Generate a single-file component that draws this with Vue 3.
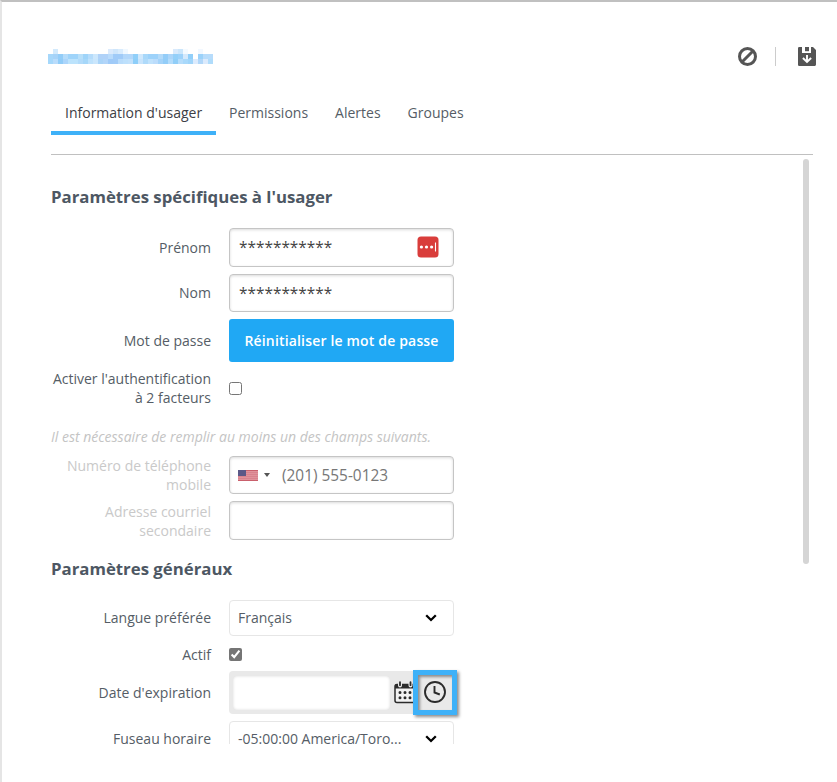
<script setup>
import { ref } from 'vue'

const tabs = ["Information d'usager", 'Permissions', 'Alertes', 'Groupes']
const active = ref(0)
const twoFactor = ref(false)
const enabled = ref(true)

const mosaic = [
  '- d3eafc - - - - - - - - - - dbeafc cfe6fb d9ecfd f0f8ff - - - - - - - - - d9eafc cbe6fb f4faff - - f2f8ff - -',
  'a6d7fa a6d3f8 93cdf8 b5dcfa 9fd4fa 9fd4fa b7dff9 9fd4f9 b5dcfb cce7fc b0d2f8 b0d2f8 b9dbfb a0cbf8 a0cbf8 b2d7fa b2d7fa 90cff9 d0e8fc a8d8fa 9dd2fa 9dd2fa b3daf9 94cdf8 abd5f9 94d0f9 9dd2fa d4e9fc 92cff9 ffffff 9bd2fa b7dcfb b7dcfb',
  'a5d8fb b9dcfb 90ccf8 abd5fb bce3fc bce3fc b2dbfa a6d7f9 bee2fc cae6fc aad4f8 b2d5f9 9fcaf8 a0cbf8 b9dcfb bde0fc c2e1fb 8ecef9 c8e4fc afdafa c0e2fc bbdcfb a4d3f9 93cdf8 b3dcfb 91cef8 b6ddfb a9d9fb a0d5fa dcebfd b1d7f9 dbeafc b0dcfb'
].map((row) => row.split(' ').map((c) => (c === '-' ? 'transparent' : '#' + c)))
</script>

<template>
  <main class="panel">
    <header class="header">
      <div class="mosaic">
        <div v-for="(row, r) in mosaic" :key="r" class="mosaic-row">
          <span v-for="(c, i) in row" :key="i" :style="{ background: c }"></span>
        </div>
      </div>
      <div class="actions">
        <svg class="ban" viewBox="0 0 20 20" width="20" height="20">
          <circle cx="10.500" cy="9.500" r="8" fill="none" stroke="#555" stroke-width="3" />
          <path d="M5 15 16 4" stroke="#555" stroke-width="3" />
        </svg>
        <span class="divider"></span>
        <svg viewBox="0 0 18 19" width="18" height="19">
          <path d="M1.200 0H4v6h9V0h2l3 3v14.600Q18 19 16.800 19H1.200Q0 19 0 17.800V1.200Q0 0 1.200 0Z" fill="#555" />
          <path d="M7 0h4v4.200H7z" fill="#555" />
          <path d="M9 8v7M4.900 11 9 15l4.100-4" fill="none" stroke="#fff" stroke-width="1.900" />
        </svg>
      </div>
    </header>

    <nav class="tabs">
      <button v-for="(t, i) in tabs" :key="t" class="tab" :class="{ active: active === i }" @click="active = i">{{ t }}</button>
    </nav>

    <div class="scroll">
      <form class="form" @submit.prevent>
        <h2>Paramètres spécifiques à l'usager</h2>
        <div class="row first">
          <label>Prénom</label>
          <div class="input">
            <span class="stars">***********</span>
            <svg class="pass" viewBox="0 0 22 22" width="22" height="22">
              <rect x=".5" y=".5" width="21" height="21" rx="3.500" fill="#d93d3b" />
              <circle cx="4.400" cy="11" r="1.600" fill="#fff" />
              <circle cx="9.500" cy="11" r="1.600" fill="#fff" />
              <circle cx="14.600" cy="11" r="1.600" fill="#fff" />
              <path d="M18.500 6.500v9" stroke="#fff" stroke-width="1.100" />
            </svg>
          </div>
        </div>
        <div class="row second">
          <label class="raised">Nom</label>
          <div class="input"><span class="stars">***********</span></div>
        </div>
        <div class="row tall">
          <label>Mot de passe</label>
          <button class="reset">Réinitialiser le mot de passe</button>
        </div>
        <div class="row double">
          <label class="raised">Activer l'authentification<br />à 2 facteurs</label>
          <input v-model="twoFactor" type="checkbox" />
        </div>
        <p class="note">Il est nécessaire de remplir au moins un des champs suivants.</p>
        <div class="row second muted">
          <label>Numéro de téléphone<br />mobile</label>
          <div class="input phone">
            <svg class="flag" viewBox="0 0 20 11" width="20" height="11">
              <rect width="20" height="11" fill="#e0929b" />
              <path d="M0 .5h20M0 10.500h20" stroke="#c9606c" />
              <path d="M0 2.500h20M0 4.500h20M0 6.500h20M0 8.500h20" stroke="#d67e89" stroke-width=".8" />
              <rect width="8" height="6" fill="#5b5887" />
            </svg>
            <span class="caret"></span>
            <span class="number">(201) 555-0123</span>
          </div>
        </div>
        <div class="row first muted">
          <label>Adresse courriel<br />secondaire</label>
          <div class="input"></div>
        </div>
        <h2 class="general">Paramètres généraux</h2>
        <div class="row choice">
          <label>Langue préférée</label>
          <div class="select">
            <span>Français</span>
            <svg viewBox="0 0 12 8" width="12" height="8"><path d="M1.200 1.300 6 6l4.800-4.700" fill="none" stroke="#000" stroke-width="2.300" /></svg>
          </div>
        </div>
        <div class="row check">
          <label>Actif</label>
          <input v-model="enabled" type="checkbox" />
        </div>
        <div class="row tall">
          <label>Date d'expiration</label>
          <div class="date">
            <span class="date-field"></span>
            <svg class="calendar" viewBox="0 0 22 23" width="22" height="23">
              <rect x="1" y="3.500" width="20" height="18" rx="2" fill="#f2f2f2" stroke="#2b2b2b" stroke-width="1.500" />
              <path d="M1 7.500V4.500Q1 3 2.500 3h17Q21 3 21 4.500v3z" fill="#2b2b2b" />
              <path d="M6 1v3.500M16.500 1v3.500" stroke="#e9e9e9" stroke-width="4" stroke-linecap="round" />
              <path d="M6 1.200v3M16.500 1.200v3" stroke="#2b2b2b" stroke-width="1.800" stroke-linecap="round" />
              <path d="M6 11.500h12M6 16.800h12" stroke="#2b2b2b" stroke-width="3" stroke-linecap="round" stroke-dasharray="0 5" />
            </svg>
            <div class="highlight">
              <svg viewBox="0 0 22 22" width="22" height="22">
                <circle cx="11" cy="11" r="10" fill="none" stroke="#2b2b2b" stroke-width="1.900" />
                <path d="M10.500 5v6.500l5.300 2" fill="none" stroke="#2b2b2b" stroke-width="1.900" />
              </svg>
            </div>
          </div>
        </div>
        <div class="row choice">
          <label>Fuseau horaire</label>
          <div class="select">
            <span>-05:00:00 America/Toro...</span>
            <svg viewBox="0 0 12 8" width="12" height="8"><path d="M1.200 1.300 6 6l4.800-4.700" fill="none" stroke="#000" stroke-width="2.300" /></svg>
          </div>
        </div>
      </form>
      <div class="scrollbar"></div>
    </div>
  </main>
</template>

<style>
body {
  background: #fff;
  overflow: hidden;
}
</style>

<style scoped>
* {
  box-sizing: border-box;
}
.panel {
  height: 782px;
  border-top: 2px solid #c0c0c0;
  border-left: 2px solid #e5e5e5;
  font: 14px/19px 'Open Sans', sans-serif;
  color: #555d66;
}
.header {
  display: flex;
  justify-content: space-between;
  height: 92px;
  padding: 45px 21px 0 46px;
}
.mosaic {
  padding-top: 2px;
}
.mosaic-row {
  display: flex;
}
.mosaic-row span {
  width: 5px;
  height: 5px;
}
.actions {
  display: flex;
  align-items: flex-start;
}
.ban {
  margin-right: 18px;
}
.divider {
  width: 1px;
  height: 19px;
  background: #ccc;
  margin-right: 22px;
}
.tabs {
  display: flex;
  height: 61px;
  margin: 0 24px 0 49px;
  border-bottom: 1px solid #c0c0c0;
}
.tab {
  height: 41px;
  padding: 0 13.500px;
  border: 0;
  border-bottom: 4px solid transparent;
  background: none;
  font: inherit;
  color: #555d66;
}
.tab.active {
  padding: 0 13.400px 0 14px;
  color: #3d4045;
  border-color: #3eb1f8;
}
.scroll {
  display: flex;
  justify-content: space-between;
  height: 589px;
  margin: 0 28px 0 49px;
  overflow: hidden;
}
.form {
  width: 410px;
}
.scrollbar {
  width: 6px;
  height: 405px;
  margin-top: 4px;
  border-radius: 3px;
  background: #d5d5d5;
}
h2 {
  margin: 31px 0 20px;
  font-size: 16.800px;
  line-height: 22px;
  font-weight: 700;
  color: #4d5763;
  white-space: nowrap;
}
h2.general {
  margin: 18px 0 20px;
}
.row {
  display: flex;
  align-items: center;
  width: 403px;
  margin-bottom: 7px;
}
.row label {
  width: 160px;
  margin-right: 18px;
  text-align: right;
  white-space: nowrap;
  flex-shrink: 0;
}
.row label.raised {
  padding-bottom: 2px;
}
.first {
  height: 39px;
}
.second {
  height: 38px;
}
.tall {
  height: 43px;
}
.double {
  height: 39px;
}
.choice {
  height: 36px;
}
.row.check {
  height: 23px;
  margin-bottom: 5px;
}
.choice label,
.choice span {
  padding-bottom: 2px;
}
.muted label {
  color: #c9c9c9;
}
.input {
  display: flex;
  align-items: center;
  width: 225px;
  height: 100%;
  padding: 0 14px 0 9px;
  border: 1px solid #c5c5c5;
  border-radius: 4px;
  box-shadow: inset 0 1px 3px rgba(0, 0, 0, 0.15);
}
.stars {
  flex: 1;
  font-size: 15.400px;
  color: #444;
}
.pass {
  margin-bottom: 2px;
}
.reset {
  width: 225px;
  height: 43px;
  padding: 0;
  border: 0;
  border-radius: 3px;
  background: #20a8f4;
  color: #fff;
  font: 600 14px 'Open Sans', sans-serif;
  letter-spacing: 0.170px;
}
input {
  width: 13px;
  height: 13px;
  margin: 0;
  accent-color: #757575;
}
.note {
  margin: 19px 0;
  height: 19px;
  font-style: italic;
  color: #c4c4c4;
  white-space: nowrap;
}
.note + .row {
  margin-top: -9px;
}
.phone {
  padding-left: 8px;
}
.caret {
  margin: 0 12px 0 6px;
  border: 3px solid transparent;
  border-top: 4px solid #555;
  border-bottom: 0;
}
.number {
  font-size: 15.400px;
  color: #777;
}
.select {
  display: flex;
  align-items: center;
  justify-content: space-between;
  width: 225px;
  height: 100%;
  padding: 0 16px 0 8px;
  border: 1px solid #e6e6e6;
  border-radius: 4px;
}
.date {
  position: relative;
  display: flex;
  align-items: center;
  width: 225px;
  height: 43px;
  padding-left: 4px;
  border-radius: 4px;
  background: #e9e9e9;
}
.date-field {
  width: 157px;
  height: 34px;
  margin-right: 4px;
  border-radius: 4px;
  background: #fff;
  box-shadow: inset 0 0 3px rgba(0, 0, 0, 0.15);
}
.highlight {
  position: absolute;
  left: 184px;
  top: -1px;
  display: flex;
  align-items: center;
  justify-content: center;
  width: 44px;
  height: 45px;
  padding-bottom: 1px;
  border: 5px solid #3eb1f8;
  background: #e9e9e9;
  box-shadow: 2px 2px 3px rgba(0, 0, 0, 0.45), inset 2px 2px 3px rgba(0, 0, 0, 0.4);
}
</style>
